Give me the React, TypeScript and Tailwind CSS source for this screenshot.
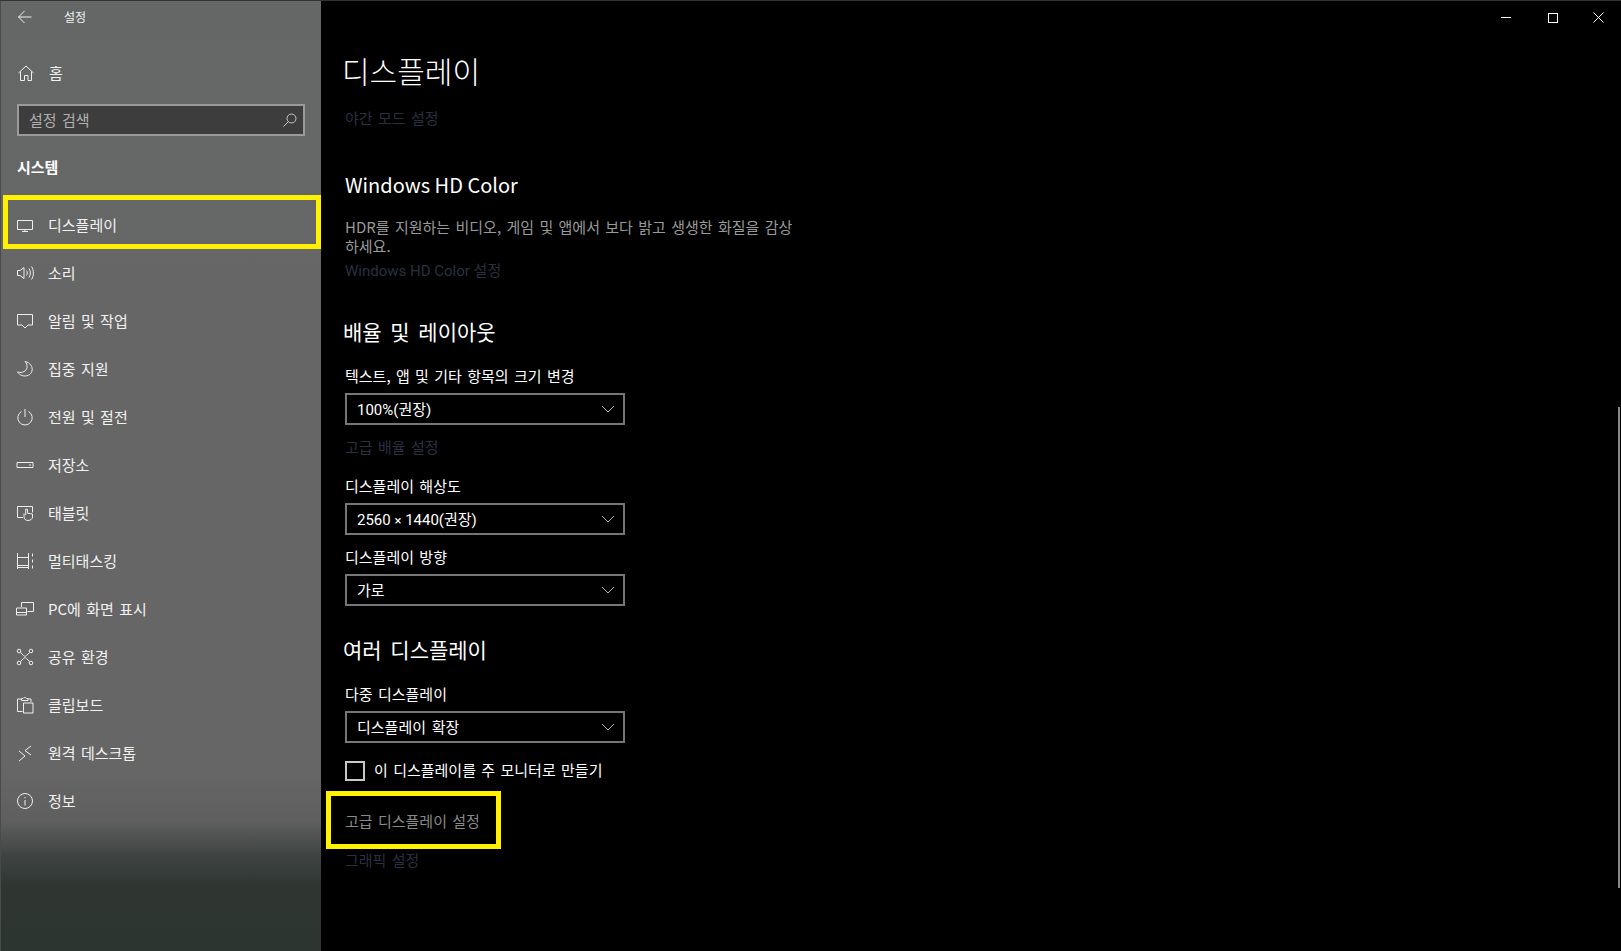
import type { ReactNode } from 'react';

const iconProps = {
    width: 18,
    height: 18,
    viewBox: '0 0 18 18',
    fill: 'none',
    stroke: '#eeeeee',
    strokeWidth: 1,
};

const navItems: { label: string; icon: ReactNode }[] = [
    {
        label: '디스플레이',
        icon: (
            <svg {...iconProps}>
                <path d="M1.500 4.500h15v9h-15zM9 13.500v2M6 15.500h6" />
            </svg>
        ),
    },
    {
        label: '소리',
        icon: (
            <svg {...iconProps}>
                <path d="M1.500 6.500h2.500l4-3v11l-4-3h-2.500zM10.500 6.500c1 1.500 1 3.500 0 5M13 4.500c1.800 2.500 1.800 6.500 0 9M15.500 2.500c2.500 3.500 2.500 9.500 0 13" />
            </svg>
        ),
    },
    {
        label: '알림 및 작업',
        icon: (
            <svg {...iconProps}>
                <path d="M1.500 2.500h15v10.500h-4.500l-3 3-3-3h-4.500z" />
            </svg>
        ),
    },
    {
        label: '집중 지원',
        icon: (
            <svg {...iconProps}>
                <path d="M9 1.500c5 1 8 5 7 9.500-1 4-6 6-10 4.500-2-.7-3.500-2-4.500-3.500 5 1.500 9-1 9.500-4.500.3-2.500-.5-4.500-2-6z" />
            </svg>
        ),
    },
    {
        label: '전원 및 절전',
        icon: (
            <svg {...iconProps}>
                <path d="M9 1v8M5.500 3.500a7.200 7.200 0 1 0 7 0" />
            </svg>
        ),
    },
    {
        label: '저장소',
        icon: (
            <svg {...iconProps}>
                <path d="M1 6.500h16v5h-16zM13 9h2" />
            </svg>
        ),
    },
    {
        label: '태블릿',
        icon: (
            <svg {...iconProps}>
                <path d="M7 13.500h-5.500v-11h15v6M8 9.500l0 3c0 2.500 1.500 4 4 4s4.500-1.500 4.500-3.500v-3l-5-.8v-4h-1.800v6" />
            </svg>
        ),
    },
    {
        label: '멀티태스킹',
        icon: (
            <svg {...iconProps}>
                <path d="M1.500 1v16M12.500 1v16M1.500 5.500h11v8h-11M1.500 15.500h11M16.500 1.500v3M16.500 7.500v3M16.500 13.500v3" />
            </svg>
        ),
    },
    {
        label: 'PC에 화면 표시',
        icon: (
            <svg {...iconProps}>
                <path d="M5.500 7v-4.500h12v9h-6M.5 8h10v7h-10zM.5 12.500h10" />
            </svg>
        ),
    },
    {
        label: '공유 환경',
        icon: (
            <svg {...iconProps}>
                <circle cx="3" cy="3" r="1.800" />
                <circle cx="15" cy="3" r="1.800" />
                <circle cx="3" cy="15" r="1.800" />
                <circle cx="15" cy="15" r="1.800" />
                <path d="M4.500 4.500l3 3c1 1 2 1 3 0l3-3M4.500 13.500l3-3c1-1 2-1 3 0l3 3" />
            </svg>
        ),
    },
    {
        label: '클립보드',
        icon: (
            <svg {...iconProps}>
                <path d="M5 3h-3.500v12.500h5M12 3h3v3M5.500 4.500v-2h1.500a2 2 0 0 1 3.500 0h1.500v2zM7.500 7h9.500v10h-9.500z" />
            </svg>
        ),
    },
    {
        label: '원격 데스크톱',
        icon: (
            <svg {...iconProps}>
                <path d="M3 7l6 5-6 5M15 2l-6 4.500 6 4.500" />
            </svg>
        ),
    },
    {
        label: '정보',
        icon: (
            <svg {...iconProps}>
                <circle cx="9" cy="9" r="7.500" />
                <path d="M9 8v5.500M9 5v1.200" />
            </svg>
        ),
    },
];

function Select({ value }: { value: ReactNode }) {
    return (
        <div className="flex h-8 w-[280px] items-center justify-between border-2 border-[#767676] pl-[10px] pr-[8px] font-['Roboto','Noto_Sans_CJK_KR',sans-serif] text-[15px] text-white">
            <span className="pt-[2px]">{value}</span>
            <svg width="14" height="8" viewBox="0 0 14 8" fill="none" stroke="#b5b5b5" strokeWidth="1">
                <path d="M1 1l6 6 6-6" />
            </svg>
        </div>
    );
}

function Label({ children, className }: { children: ReactNode; className: string }) {
    return <div className={`h-5 text-[15px] leading-5 text-white ${className}`}>{children}</div>;
}

function DimLink({ children, className }: { children: ReactNode; className: string }) {
    return <div className={`h-5 text-[15px] leading-5 text-[#2a3040] ${className}`}>{children}</div>;
}

function Heading({ children, className }: { children: ReactNode; className: string }) {
    return <h2 className={`-ml-[2px] h-7 text-[21px] font-normal leading-7 text-white [word-spacing:4px] ${className}`}>{children}</h2>;
}

export default function App() {
    return (
        <div className="flex h-[951px] w-[1621px] overflow-hidden border-t border-[#333333] bg-black font-['Noto_Sans_CJK_KR','Noto_Sans',sans-serif] text-white [word-spacing:2px]">
            <aside className="flex h-full w-[321px] shrink-0 flex-col border-l border-[#4a4a4a] bg-[linear-gradient(180deg,#656767_0px,#666666_300px,#666666_770px,#5e5f5e_820px,#3f4442_855px,#2f3632_885px,#2d3531_951px)] text-[#f2f2f2]">
                <div className="flex h-8 items-center">
                    <svg className="ml-[17px]" width="14" height="14" viewBox="0 0 14 14" fill="none" stroke="#eeeeee" strokeWidth="1">
                        <path d="M13.500 7h-13M6.500 1l-6 6 6 6" />
                    </svg>
                    <span className="ml-[32px] text-xs">설정</span>
                </div>
                <div className="mt-[24px] flex h-8 items-center">
                    <svg className="ml-[17px]" width="16" height="16" viewBox="0 0 16 16" fill="none" stroke="#eeeeee" strokeWidth="1">
                        <path d="M.5 8l7.500-7 7.500 7M2.500 6.500v9h4v-5h3.500v5h3.500v-9" />
                    </svg>
                    <span className="ml-[15px] text-[15px]">홈</span>
                </div>
                <div className="ml-[16px] mt-[15px] flex h-8 w-[288px] items-center justify-between border-2 border-[#9a9a9a] bg-[#3d3d3d] pl-[10px] pr-[6px] text-[15px] text-[#b0b0b0]">
                    <span>설정 검색</span>
                    <svg width="14" height="14" viewBox="0 0 14 14" fill="none" stroke="#c8c8c8" strokeWidth="1">
                        <circle cx="8.500" cy="5.500" r="4.500" />
                        <path d="M5.300 8.700l-4.800 4.800" />
                    </svg>
                </div>
                <div className="ml-[16px] mt-[19px] h-6 text-[15px] font-semibold leading-6 text-white">시스템</div>
                <nav className="mt-[22px] flex flex-col">
                    {navItems.map((item) => (
                        <div key={item.label} className="flex h-12 items-center pl-[15px]">
                            <span className="flex w-[18px] justify-center">{item.icon}</span>
                            <span className="ml-[14px] text-[15px]">{item.label}</span>
                        </div>
                    ))}
                </nav>
            </aside>

            <main className="relative flex-1 pl-[24px]">
                <div className="absolute right-[17px] top-[11px] flex items-center gap-[36px]">
                    <span className="h-px w-[10px] bg-white" />
                    <span className="h-[10px] w-[10px] translate-x-px border border-white" />
                    <svg width="11" height="11" viewBox="0 0 11 11" fill="none" stroke="#ffffff" strokeWidth="1">
                        <path d="M.5.5l10 10M10.500.5l-10 10" />
                    </svg>
                </div>

                <h1 className="-ml-[3px] mt-[49px] h-10 text-[30px] font-light leading-10 text-white">디스플레이</h1>
                <DimLink className="mt-[18px]">야간 모드 설정</DimLink>
                <h2 className="mt-[43px] h-7 text-[20px] font-normal leading-7 text-white [word-spacing:0px]">Windows HD Color</h2>
                <p className="mt-[18px] w-[450px] text-[15px] leading-[19px] text-[#9a9a9a]">
                    HDR를 지원하는 비디오, 게임 및 앱에서 보다 밝고 생생한 화질을 감상하세요.
                </p>
                <div className="mt-[6px] h-5 font-['Roboto','Noto_Sans_CJK_KR',sans-serif] text-[15px] leading-5 text-[#2a3040] [word-spacing:0px]">Windows HD Color 설정</div>

                <Heading className="mt-[36px]">배율 및 레이아웃</Heading>
                <Label className="mt-[21px]">텍스트, 앱 및 기타 항목의 크기 변경</Label>
                <div className="mt-[7px]">
                    <Select value="100%(권장)" />
                </div>
                <DimLink className="mt-[12px]">고급 배율 설정</DimLink>
                <Label className="mt-[19px]">디스플레이 해상도</Label>
                <div className="mt-[7px]">
                    <Select
                        value={
                            <span className="[word-spacing:0px]">
                                2560 <span className="text-[13px]">×</span> 1440(권장)
                            </span>
                        }
                    />
                </div>
                <Label className="mt-[12px]">디스플레이 방향</Label>
                <div className="mt-[7px]">
                    <Select value="가로" />
                </div>

                <Heading className="mt-[29px]">여러 디스플레이</Heading>
                <Label className="mt-[21px]">다중 디스플레이</Label>
                <div className="mt-[7px]">
                    <Select value="디스플레이 확장" />
                </div>
                <div className="mt-[18px] flex h-5 items-center">
                    <span className="h-5 w-5 border-2 border-[#c8c8c8]" />
                    <span className="ml-[9px] -translate-y-px text-[15px] leading-5">이 디스플레이를 주 모니터로 만들기</span>
                </div>
                <div className="mt-[30px] h-5 text-[15px] leading-5 text-[#8a8a8a]">고급 디스플레이 설정</div>
                <DimLink className="mt-[19px]">그래픽 설정</DimLink>

                <div className="absolute right-[1px] top-[406px] h-[481px] w-[2px] bg-[#888888]" />
            </main>

            {/* yellow annotation boxes */}
            <div className="absolute left-[3px] top-[195px] h-[54px] w-[318px] border-[5px] border-[#fff200]" />
            <div className="absolute left-[326px] top-[791px] h-[58px] w-[175px] border-[5px] border-[#fff200]" />
        </div>
    );
}
